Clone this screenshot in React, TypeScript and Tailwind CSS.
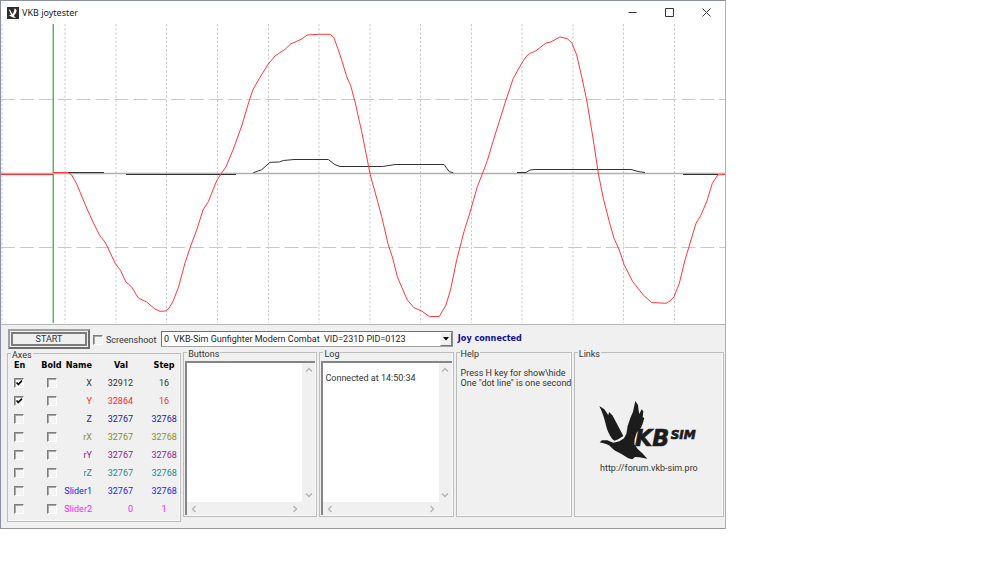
import React from 'react'

const axes = [
  { name: 'X', val: '32912', step: '16', color: 'text-[#333333]', enabled: true },
  { name: 'Y', val: '32864', step: '16', color: 'text-[#ff2a2a]', enabled: true },
  { name: 'Z', val: '32767', step: '32768', color: 'text-[#1c1c96]', enabled: false },
  { name: 'rX', val: '32767', step: '32768', color: 'text-[#8c8c20]', enabled: false },
  { name: 'rY', val: '32767', step: '32768', color: 'text-[#8c1c8c]', enabled: false },
  { name: 'rZ', val: '32767', step: '32768', color: 'text-[#208c8c]', enabled: false },
  { name: 'Slider1', val: '32767', step: '32768', color: 'text-[#2020ff]', enabled: false },
  { name: 'Slider2', val: '0', step: '1', color: 'text-[#ff20ff]', enabled: false },
]

// one vertical line per second
const seconds = [2, 65, 116, 166.5, 217.5, 268.5, 319, 370, 420.5, 471.5, 522, 573, 623.5, 674.5]

const yTrace =
  '53,172.5 68,172.5 71.7,175 76.7,184 86.7,208 93,222 100,236 105,242 108,248 115,263 120.7,270.7 125.7,281.7 131.7,287 138.3,298 146.7,302 155,309 160,311.3 165.7,311 169,308 172.7,302 178.3,287.7 185,263 190.7,246 196.7,230 203,210 208.3,201.7 216.7,180.7 221,174 226,166.7 233,150 241.7,126 250,98 253.3,89 260,77.3 268.3,64 275,56 285,49.3 290.7,44 301.7,39 307.3,35 318.3,34.3 330,34.3 334,37.7 341.7,60 346.7,76.7 350.7,85.7 355,101.7 361.7,131.7 369.3,170 370.7,176.7 376.7,198 381.7,216.7 388.3,245 392.7,258 397.3,276.7 401.7,287 407.3,300 414,307.7 421.7,311 429.3,316.5 439.3,316.5 446,305 450.7,289 456.7,260 464,231.7 470.7,210 477.3,186.7 482.7,173 487.3,160.7 495,135 506,100 513.3,78.3 521.7,63.3 526,56.7 529.3,53.7 536,50.7 546,43 550.7,42 560,37 567.3,38.7 571.7,42.7 576.7,55 581.7,76.7 586.7,100 593.3,140 598.3,173.3 603.3,198.3 609.3,221.7 614,238.3 619.3,250 624,264.3 632.7,281.7 643.3,295 651.7,302.5 666,303.3 670,301 674,296.7 679.3,283.3 685,260 696,223.3 700.7,215.7 706.7,201.7 712.3,183.3 717.7,175 725,174.5'

const xTraces = [
  '68,172.5 104,172.5',
  '126,174.5 236,174.5',
  '253.3,172.7 261.7,169.7 270,162.3 279.3,162 283.3,160.5 294,159.5 328.3,159.5 335,164.7 340,166.5 382.7,166.5 395,164.5 444,164.5 449.3,171.7 453.3,172.7',
  '517,172.5 526,172.5 530,170 535,169.5 631,169.5 638,171.5 645,172.5',
  '683,174.5 718,174.5',
]

function Chart() {
  return (
    <svg
      className="block h-[300px] w-full"
      viewBox="1 24 724 300"
      preserveAspectRatio="none"
      fill="none"
      role="img"
      aria-label="Axis chart"
    >
      {seconds.map((x) => (
        <path key={x} d={`M${x} 24V323`} stroke="#cbcbcb" strokeDasharray="2.4 1.8" />
      ))}
      <path d="M1 99.5H725M1 247.5H725" stroke="#c8c8c8" strokeWidth="1.2" strokeDasharray="14 4.9" />
      <path d="M53.2 24V323" stroke="#3c9f45" strokeWidth="1.2" />
      <path d="M1 173.5H725" stroke="#b0b0b0" strokeWidth="1.4" />
      {xTraces.map((points) => (
        <polyline key={points} points={points} stroke="#333333" />
      ))}
      <polyline points="1,174.5 53,174.5" stroke="#ff3030" />
      <polyline points={yTrace} stroke="#ff3838" />
    </svg>
  )
}

function TitleBar() {
  const button = 'flex h-full w-[37px] items-center justify-center'
  return (
    <header className="flex h-[23px] items-center bg-white pl-[6px] text-[#1a1a1a]">
      <svg className="h-[12px] w-[12px]" viewBox="0 0 36 36">
        <path d="M0 0H36V36H0Z" fill="#2d2d2d" />
        <path
          d="M5 6L10 10L16 21L20 16L23 4L29 10L27 18L22 24L21 27L27 33L16 31L5 25L12 24Z"
          fill="#ffffff"
        />
      </svg>
      <h1 className="ml-[3px] grow font-['Noto_Sans',sans-serif] text-[9px] leading-[12px]">
        VKB joytester
      </h1>
      <button className={button} aria-label="Minimize">
        <svg className="h-[9px] w-[9px]" viewBox="0 0 9 9" stroke="#333333" fill="none">
          <path d="M0.5 4.5H8.5" />
        </svg>
      </button>
      <button className={button} aria-label="Maximize">
        <svg className="h-[9px] w-[9px]" viewBox="0 0 9 9" stroke="#333333" fill="none">
          <path d="M0.5 0.5H8.5V8.5H0.5Z" />
        </svg>
      </button>
      <button className={button} aria-label="Close">
        <svg className="h-[9px] w-[9px]" viewBox="0 0 9 9" stroke="#333333" fill="none">
          <path d="M0.5 0.5L8.5 8.5M8.5 0.5L0.5 8.5" />
        </svg>
      </button>
    </header>
  )
}

function CheckBox({ id, label, checked }: { id?: string; label?: string; checked?: boolean }) {
  return (
    <span className="grid h-[10px] w-[10px]">
      <input
        id={id}
        type="checkbox"
        aria-label={label}
        defaultChecked={checked}
        className="peer col-start-1 row-start-1 h-[10px] w-[10px] appearance-none border border-t-[#7c7c7c] border-r-white border-b-white border-l-[#7c7c7c] bg-[#f4f4f4] shadow-[inset_1px_1px_0_#a8a8a8] checked:bg-white"
      />
      <svg
        className="pointer-events-none invisible col-start-1 row-start-1 h-[10px] w-[10px] peer-checked:visible"
        viewBox="0 0 10 10"
        fill="none"
        stroke="#111111"
        strokeWidth="1.7"
      >
        <path d="M2.5 4.5L4.3 6.4L8 2.6" />
      </svg>
    </span>
  )
}

function Group({ title, className, children }: { title: string; className: string; children?: React.ReactNode }) {
  return (
    <fieldset className={`min-w-0 border border-[#bdbdbd] shadow-[inset_-1px_-1px_0_#fafafa] ${className}`}>
      <legend className="ml-[3px] h-[7px] px-px leading-[11px]">{title}</legend>
      {children}
    </fieldset>
  )
}

function Arrow({ d }: { d: string }) {
  return (
    <svg className="h-[8px] w-[8px]" viewBox="0 0 8 8" fill="none" stroke="#b4b4b4" strokeWidth="1.4">
      <path d={d} />
    </svg>
  )
}

function ScrollBox({ label, children }: { label: string; children?: React.ReactNode }) {
  return (
    <div className="mx-px mt-[5px] grid h-[154px] grid-cols-[1fr_13px] grid-rows-[1fr_13px] border-t-2 border-l-2 border-[#858585]">
      <div className="bg-white pt-[10px] pl-[2px]" role="log" aria-label={label}>
        {children}
      </div>
      <div className="flex flex-col items-center justify-between py-[3px]">
        <Arrow d="M1 5.5L4 2.5L7 5.5" />
        <Arrow d="M1 2.5L4 5.5L7 2.5" />
      </div>
      <div className="flex items-center justify-between px-[3px]">
        <Arrow d="M5.5 1L2.5 4L5.5 7" />
        <Arrow d="M2.5 1L5.5 4L2.5 7" />
      </div>
    </div>
  )
}

function AxesTable() {
  return (
    <table className="w-full table-fixed">
      <thead>
        <tr className="h-[17px] font-['DejaVu_Sans_Condensed','DejaVu_Sans',sans-serif] text-black">
          <th className="w-[30px] pl-[6px] text-left">En</th>
          <th className="w-[27px] text-center">Bold</th>
          <th className="w-[27px] text-right">
            <span className="flex justify-end">Name</span>
          </th>
          <th className="w-[41px] pl-[17px] text-center">Val</th>
          <th className="pl-[15px] text-center">Step</th>
        </tr>
      </thead>
      <tbody>
        {axes.map((axis) => (
          <tr key={axis.name} className={`h-[18px] ${axis.color}`}>
            <td className="pl-[6px]">
              <CheckBox label={`Enable ${axis.name}`} checked={axis.enabled} />
            </td>
            <td className="pl-[9px]">
              <CheckBox label={`Bold ${axis.name}`} />
            </td>
            <td className="text-right">
              <span className="flex justify-end">{axis.name}</span>
            </td>
            <td className="text-right">{axis.val}</td>
            <td className="pl-[15px] text-center">{axis.step}</td>
          </tr>
        ))}
      </tbody>
    </table>
  )
}

function VkbLogo() {
  return (
    <svg className="h-[60px] w-[100px]" viewBox="30 30 300 180" fill="#1c1c1c" role="img" aria-label="VKB Sim">
      <path d="M31 48L46 58L58 76L60 66L70 76L79 92L103 138L88 148L76 152C66 145 57 127 52 110C47 88 41 68 31 48Z" />
      <path d="M139 33L147 45L149 62L151 72L158 58L163 64L161 82L166 84L162 98L156 113L143 128L137 147L136 163L146 177L160 190L175 206L151 202L138 201L130 208L118 205L96 191L76 181L60 166L49 161L32 157L39 151L55 151L73 158L91 154L105 145L112 132L116 108L124 84L132 65Z" />
      <g
        fontFamily="'DejaVu Sans', sans-serif"
        fontWeight="bold"
        fontStyle="italic"
        stroke="#1c1c1c"
        strokeWidth="2"
      >
        <text x="138" y="167" fontSize="67">
          KB
        </text>
        <text x="245" y="148" fontSize="36">
          SIM
        </text>
      </g>
    </svg>
  )
}

function DeviceBar() {
  return (
    <div className="flex h-[21px] items-center pl-px">
      <button className="h-[20px] w-[82px] shrink-0 border-2 border-t-[#a0a0a0] border-r-[#6c6c6c] border-b-[#6c6c6c] border-l-[#a0a0a0] p-px">
        <span className="flex h-full items-center justify-center border-2 border-[#7c7c7c] leading-[10px]">START</span>
      </button>
      <div className="ml-[3px] flex w-[68px] shrink-0 items-center gap-[3px] pt-[3px]">
        <CheckBox id="screenshot" />
        <label htmlFor="screenshot">Screenshoot</label>
      </div>
      <div className="grid h-[16px] min-w-0 grow-[294] basis-0 border border-t-[#707070] border-r-[#8c8c8c] border-b-[#a0a0a0] border-l-[#707070] bg-white">
        <select
          aria-label="Device"
          className="col-start-1 row-start-1 w-full appearance-none bg-transparent pl-[2px] leading-[14px] text-[#222222]"
        >
          <option>{'0\u00a0 VKB-Sim Gunfighter Modern Combat\u00a0 VID=231D PID=0123'}</option>
        </select>
        <span className="pointer-events-none col-start-1 row-start-1 flex w-[12px] items-center justify-center justify-self-end border border-t-white border-r-[#777777] border-b-[#777777] border-l-white bg-[#f0f0f0]">
          <svg className="h-[4px] w-[6px]" viewBox="0 0 6 4">
            <path d="M0 0H6L3 3.5Z" fill="#000000" />
          </svg>
        </span>
      </div>
      <p className="min-w-0 grow-[270] basis-0 pl-[5px] font-['DejaVu_Sans_Condensed','DejaVu_Sans',sans-serif] font-bold text-[#101090]">
        Joy connected
      </p>
    </div>
  )
}

function App() {
  return (
    <div className="min-h-screen bg-white">
      <main className="w-[72.6%] border border-t-[#8c8fa3] border-r-[#b0b0b0] border-b-[#979797] border-l-[#8c8fa3] font-['Roboto',sans-serif] text-[9px] leading-[11px] text-[#333333]">
        <TitleBar />
        <Chart />
        <div className="border-t border-[#b4b4b4] bg-[#f0f0f0] pt-[3px] pr-px pb-[6px] pl-[6px]">
          <DeviceBar />
          <div className="grid grid-cols-[174fr_134fr_134fr_116fr_150fr] items-start gap-[2px]">
            <Group title="Axes" className="mt-px h-[172px]">
              <AxesTable />
            </Group>
            <Group title="Buttons" className="h-[168px]">
              <ScrollBox label="Buttons" />
            </Group>
            <Group title="Log" className="h-[168px]">
              <ScrollBox label="Log">Connected at 14:50:34</ScrollBox>
            </Group>
            <Group title="Help" className="h-[168px]">
              <p className="pt-[12px] pl-[4px] leading-[10px] whitespace-nowrap">
                Press H key for show\hide
                <br />
                One "dot line" is one second
              </p>
            </Group>
            <Group title="Links" className="h-[168px]">
              <div className="flex flex-col items-center pt-[44px]">
                <VkbLogo />
                <a href="http://forum.vkb-sim.pro" className="pt-[3px]">
                  http://forum.vkb-sim.pro
                </a>
              </div>
            </Group>
          </div>
        </div>
      </main>
    </div>
  )
}

export default App
